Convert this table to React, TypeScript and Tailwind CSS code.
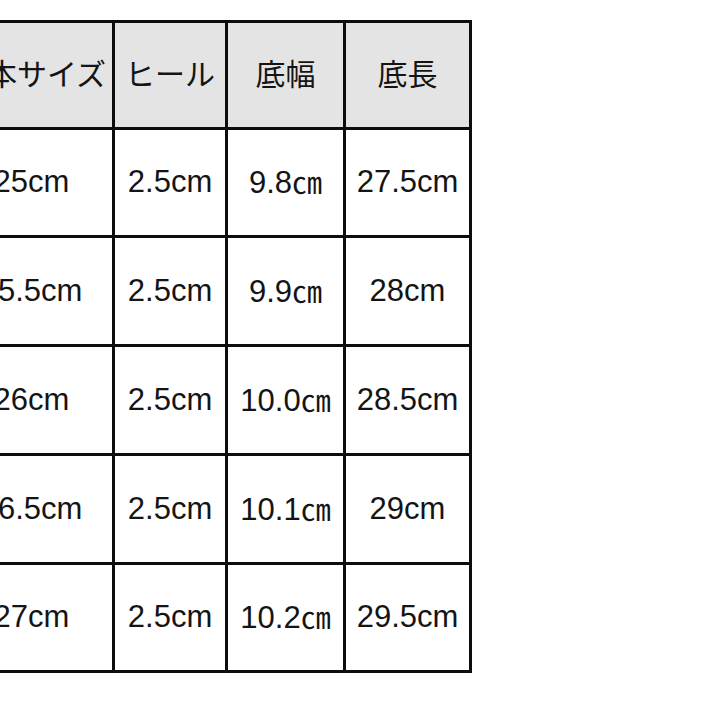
const header = ["日本サイズ", "ヒール", "底幅", "底長"];

const rows = [
  ["25cm", "2.5cm", "9.8", "27.5cm"],
  ["25.5cm", "2.5cm", "9.9", "28cm"],
  ["26cm", "2.5cm", "10.0", "28.5cm"],
  ["26.5cm", "2.5cm", "10.1", "29cm"],
  ["27cm", "2.5cm", "10.2", "29.5cm"],
];

const widths = ["w-[164px]", "w-[113px]", "w-[118px]", "w-[126px]"];
const heights = ["h-[108px]", "h-[109px]", "h-[109px]", "h-[109px]", "h-[108px]"];

const cell = "flex items-center justify-center border-r-[3px] border-b-[3px] border-[#0d0d0d] shrink-0";

export default function App() {
  return (
    <div className="w-[724px] h-[724px] bg-white overflow-hidden">
      <div className="mt-[20px] ml-[-52px] inline-flex flex-col border-t-[3px] border-l-[3px] border-[#0d0d0d] text-[#141414]">
        {/* Header */}
        <div className="flex bg-[#e4e4e4]">
          {header.map((h, i) => (
            <div
              key={h}
              className={`${cell} ${widths[i]} h-[107px] pb-[5px] text-[30px] font-['Noto_Sans_CJK_JP',sans-serif]`}
            >
              {h}
            </div>
          ))}
        </div>

        {/* Body */}
        {rows.map((r, ri) => (
          <div key={ri} className="flex bg-white">
            {r.map((v, i) => (
              <div
                key={i}
                className={`${cell} ${widths[i]} ${heights[ri]} text-[31px] font-['Liberation_Sans',Arial,sans-serif]`}
              >
                {i === 2 ? (
                  <span>
                    {v}
                    <span className="text-[30px] font-['Noto_Sans_CJK_JP',sans-serif]">㎝</span>
                  </span>
                ) : (
                  v
                )}
              </div>
            ))}
          </div>
        ))}
      </div>
    </div>
  );
}
